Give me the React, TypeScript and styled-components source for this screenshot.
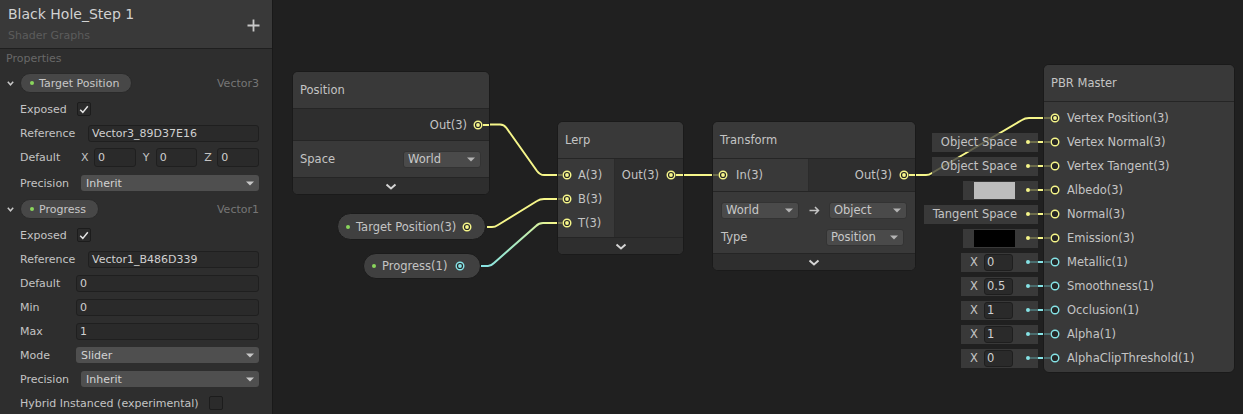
import styled, { createGlobalStyle } from "styled-components";

const X0 = 273;
const YELLOW = "#f6f68a";
const CYAN = "#86e3e6";
const YELLOW_DIM = "#6c6c4b";
const CYAN_DIM = "#4a6c6d";
const GREEN = "#8ad65c";

const GlobalStyle = createGlobalStyle`
  * { box-sizing: border-box; }
  body {
    margin: 0;
    background: #202020;
    font-family: "DejaVu Sans", "Liberation Sans", sans-serif;
    font-size: 11px;
    color: #c4c4c4;
  }
`;

const Page = styled.div`
  display: flex;
  width: 1243px;
  height: 414px;
  overflow: hidden;
`;

/* ---------- left blackboard ---------- */

const Panel = styled.aside`
  width: 273px;
  flex: none;
  height: 414px;
  background: #2e2e2e;
  border-right: 1px solid #191919;
  display: flex;
  flex-direction: column;
`;

const PanelHeader = styled.header`
  height: 49px;
  flex: none;
  background: #393939;
  border-bottom: 1px solid #1f1f1f;
  padding: 5px 12px 0 8px;
  display: flex;
  justify-content: space-between;
`;

const TitleBlock = styled.div`
  display: flex;
  flex-direction: column;
`;

const GraphTitle = styled.div`
  font-size: 14px;
  line-height: 18px;
  color: #d2d2d2;
`;

const GraphPath = styled.div`
  font-size: 11px;
  line-height: 14px;
  margin-top: 6px;
  color: #5c5c5c;
`;

const AddButton = styled.svg`
  margin-top: 14px;
  flex: none;
`;

const PanelBody = styled.div`
  display: flex;
  flex-direction: column;
  padding-right: 13px;
`;

const SectionLabel = styled.div`
  height: 20px;
  line-height: 20px;
  padding-left: 6px;
  color: #686868;
`;

const PropHead = styled.div`
  height: 24px;
  margin: 2px 0;
  display: flex;
  align-items: center;
  padding-left: 7px;
`;

const PropPill = styled.div`
  height: 20px;
  margin-left: 6px;
  padding: 0 12px 0 9px;
  border-radius: 10px;
  background: #474747;
  border: 1px solid #2a2a2a;
  display: flex;
  align-items: center;
  gap: 5px;
  color: #c8c8c8;
`;

const Dot = styled.span<{ $c: string }>`
  width: 4px;
  height: 4px;
  border-radius: 50%;
  background: ${(p) => p.$c};
  flex: none;
`;

const TypeName = styled.span`
  margin-left: auto;
  color: #767676;
`;

const FieldRow = styled.div`
  height: 24px;
  display: flex;
  align-items: center;
  padding-left: 20px;
`;

const FieldLabel = styled.span<{ $w?: number }>`
  flex: none;
  width: ${(p) => (p.$w ? `${p.$w}px` : "auto")};
  margin-right: ${(p) => (p.$w ? 0 : 10)}px;
  color: #c4c4c4;
`;

const TextField = styled.div<{ $h?: number }>`
  flex: 1;
  min-width: 0;
  height: ${(p) => p.$h ?? 17}px;
  line-height: ${(p) => (p.$h ?? 17) - 2}px;
  background: #2a2a2a;
  border: 1px solid #1f1f1f;
  border-radius: 3px;
  padding-left: 3px;
  color: #d0d0d0;
  white-space: nowrap;
  overflow: hidden;
`;

const SelectField = styled.div`
  flex: 1;
  height: 16px;
  background: #4f4f4f;
  border-radius: 3px;
  padding: 0 5px 0 5px;
  display: flex;
  align-items: center;
  justify-content: space-between;
  color: #d2d2d2;
`;

const CheckBox = styled.span`
  width: 14px;
  height: 14px;
  flex: none;
  background: #2b2b2b;
  border: 1px solid #1c1c1c;
  border-radius: 2px;
  display: flex;
  align-items: center;
  justify-content: center;
`;

const VecGroup = styled.div`
  flex: 1;
  display: flex;
  align-items: center;
  margin-right: 5px;
  &:last-child {
    margin-right: 0;
  }
`;

const AxisLabel = styled.span`
  width: 15px;
  flex: none;
  padding-left: 2px;
  color: #c4c4c4;
`;

/* ---------- graph canvas ---------- */

const Canvas = styled.main`
  position: relative;
  flex: 1;
  height: 414px;
  background: #202020;
  overflow: hidden;
`;

const WireLayer = styled.svg`
  position: absolute;
  left: 0;
  top: 0;
`;

const Placed = styled.div<{ $x: number; $y: number }>`
  position: absolute;
  left: ${(p) => p.$x - X0}px;
  top: ${(p) => p.$y}px;
`;

const Node = styled.div<{ $w: number }>`
  width: ${(p) => p.$w}px;
  flex: none;
  background: #393939;
  border: 1px solid #1a1a1a;
  border-radius: 6px;
  overflow: hidden;
  font-size: 11.5px;
  color: #c4c4c4;
`;

const NodeTitle = styled.div`
  height: 37px;
  padding-left: 7px;
  display: flex;
  align-items: center;
  background: #393939;
  border-bottom: 1px solid #252525;
`;

const OutputStrip = styled.div<{ $h: number }>`
  height: ${(p) => p.$h}px;
  background: #2e2e2e;
  border-bottom: 1px solid #252525;
  display: flex;
  align-items: center;
  justify-content: flex-end;
`;

const PortBody = styled.div`
  display: flex;
  border-bottom: 1px solid #252525;
`;

const InputCol = styled.div<{ $w: number; $pad: string }>`
  width: ${(p) => p.$w}px;
  flex: none;
  padding: ${(p) => p.$pad};
  background: #393939;
  border-right: 1px solid #2b2b2b;
`;

const OutputCol = styled.div<{ $pad: string }>`
  flex: 1;
  padding: ${(p) => p.$pad};
  background: #2e2e2e;
`;

const InRow = styled.div`
  height: 24px;
  display: flex;
  align-items: center;
`;

const OutRow = styled.div`
  height: 24px;
  display: flex;
  align-items: center;
  justify-content: flex-end;
`;

const InLabel = styled.span<{ $gap: number }>`
  margin-left: ${(p) => p.$gap}px;
  white-space: nowrap;
`;

const OutLabel = styled.span<{ $gap: number }>`
  margin-right: ${(p) => p.$gap}px;
  white-space: nowrap;
`;

const Stub = styled.span<{ $w: number; $c: string }>`
  width: ${(p) => p.$w}px;
  height: 2px;
  flex: none;
  background: ${(p) => p.$c};
`;

const Controls = styled.div<{ $pad: string; $gap?: number }>`
  padding: ${(p) => p.$pad};
  background: #393939;
  border-bottom: 1px solid #252525;
  display: flex;
  flex-direction: column;
  gap: ${(p) => p.$gap ?? 0}px;
`;

const ControlRow = styled.div<{ $h: number; $pr?: number }>`
  height: ${(p) => p.$h}px;
  padding-right: ${(p) => p.$pr ?? 0}px;
  display: flex;
  align-items: center;
  justify-content: space-between;
`;

const NodeSelect = styled.div<{ $w: number }>`
  width: ${(p) => p.$w}px;
  height: 17px;
  flex: none;
  background: #4a4a4a;
  border: 1px solid #333;
  border-radius: 3px;
  padding: 0 5px 0 4px;
  display: flex;
  align-items: center;
  justify-content: space-between;
  color: #c8c8c8;
`;

const Collapse = styled.div`
  height: 16px;
  background: #2e2e2e;
  display: flex;
  align-items: center;
  justify-content: center;
`;

const PortSvg = styled.svg`
  flex: none;
  display: block;
`;

const CanvasPill = styled.div<{ $h: number; $pr: number }>`
  height: ${(p) => p.$h}px;
  border-radius: ${(p) => p.$h / 2}px;
  background: #404040;
  border: 1px solid #1b1b1b;
  padding: 0 ${(p) => p.$pr}px 0 8px;
  display: flex;
  align-items: center;
  font-size: 11.5px;
  color: #c4c4c4;
  white-space: nowrap;
`;

const PillText = styled.span<{ $gap: number }>`
  margin: 0 ${(p) => p.$gap}px 0 6px;
`;

const MasterGroup = styled.div`
  display: flex;
  align-items: flex-start;
`;

const Defaults = styled.div`
  width: 125px;
  flex: none;
  padding-top: 42px;
  display: flex;
  flex-direction: column;
`;

const DefaultRow = styled.div`
  height: 24px;
  display: flex;
  align-items: center;
  justify-content: flex-end;
`;

const DefaultBox = styled.div<{ $pl: number }>`
  height: 19px;
  padding-left: ${(p) => p.$pl}px;
  background: rgba(64, 64, 64, 0.8);
  display: flex;
  align-items: center;
  font-size: 11.5px;
  color: #c4c4c4;
  white-space: nowrap;
`;

const Swatch = styled.span<{ $c: string }>`
  width: 41px;
  height: 17px;
  background: ${(p) => p.$c};
  flex: none;
`;

const ValueField = styled.span`
  width: 29px;
  height: 17px;
  margin-left: 6px;
  background: #2a2a2a;
  border: 1px solid #1e1e1e;
  border-radius: 3px;
  padding-left: 2px;
  line-height: 15px;
  color: #d0d0d0;
  flex: none;
`;

const BoxDot = styled.span<{ $c: string; $gap: number }>`
  width: 4px;
  height: 4px;
  margin-left: ${(p) => p.$gap}px;
  border-radius: 50%;
  background: ${(p) => p.$c};
  flex: none;
`;

const MasterBody = styled.div`
  padding: 4px 0 2px;
`;

/* ---------- small drawings ---------- */

const Port = ({ color, on }: { color: string; on?: boolean }) => (
  <PortSvg width="10" height="10" viewBox="0 0 10 10">
    <circle cx="5" cy="5" r="3.8" fill="#262626" stroke={color} strokeWidth="1.4" />
    {on && <circle cx="5" cy="5" r="1.9" fill={color} />}
  </PortSvg>
);

const DownArrow = ({ c = "#b4b4b4" }: { c?: string }) => (
  <svg width="8" height="5" viewBox="0 0 8 5">
    <polygon points="0,0.5 8,0.5 4,4.5" fill={c} />
  </svg>
);

const Chevron = () => (
  <svg width="12" height="7" viewBox="0 0 12 7">
    <polyline points="1.5,1.5 6,5.5 10.5,1.5" fill="none" stroke="#d4d4d4" strokeWidth="2" />
  </svg>
);

const SmallChevron = () => (
  <svg width="7" height="5" viewBox="0 0 7 5">
    <polyline points="0.8,0.8 3.5,3.8 6.2,0.8" fill="none" stroke="#c8c8c8" strokeWidth="1.5" />
  </svg>
);

const Check = () => (
  <svg width="10" height="9" viewBox="0 0 10 9">
    <polyline points="1.2,4.8 3.8,7.4 8.8,1.2" fill="none" stroke="#e4e4e4" strokeWidth="1.5" />
  </svg>
);

const RightArrow = () => (
  <svg width="11" height="9" viewBox="0 0 11 9">
    <path d="M0.5 4.5 H9.5 M6 1 L9.5 4.5 L6 8" fill="none" stroke="#c4c4c4" strokeWidth="1.5" />
  </svg>
);

/* ---------- data ---------- */

type Def =
  | { kind: "text"; text: string }
  | { kind: "color"; color: string }
  | { kind: "value"; value: string };

type MasterInput = { label: string; c: string; on?: boolean; def?: Def };

const masterInputs: MasterInput[] = [
  { label: "Vertex Position(3)", c: YELLOW, on: true },
  { label: "Vertex Normal(3)", c: YELLOW, def: { kind: "text", text: "Object Space" } },
  { label: "Vertex Tangent(3)", c: YELLOW, def: { kind: "text", text: "Object Space" } },
  { label: "Albedo(3)", c: YELLOW, def: { kind: "color", color: "#bdbdbd" } },
  { label: "Normal(3)", c: YELLOW, def: { kind: "text", text: "Tangent Space" } },
  { label: "Emission(3)", c: YELLOW, def: { kind: "color", color: "#000000" } },
  { label: "Metallic(1)", c: CYAN, def: { kind: "value", value: "0" } },
  { label: "Smoothness(1)", c: CYAN, def: { kind: "value", value: "0.5" } },
  { label: "Occlusion(1)", c: CYAN, def: { kind: "value", value: "1" } },
  { label: "Alpha(1)", c: CYAN, def: { kind: "value", value: "1" } },
  { label: "AlphaClipThreshold(1)", c: CYAN, def: { kind: "value", value: "0" } },
];

const dimOf = (c: string) => (c === CYAN ? CYAN_DIM : YELLOW_DIM);

const DefaultValue = ({ def, c }: { def: Def; c: string }) => {
  if (def.kind === "text")
    return (
      <DefaultBox $pl={9}>
        {def.text}
        <BoxDot $c={c} $gap={9} />
        <Stub $w={8} $c={dimOf(c)} />
      </DefaultBox>
    );
  if (def.kind === "color")
    return (
      <DefaultBox $pl={11}>
        <Swatch $c={def.color} />
        <BoxDot $c={c} $gap={11} />
        <Stub $w={8} $c={dimOf(c)} />
      </DefaultBox>
    );
  return (
    <DefaultBox $pl={9}>
      X
      <ValueField>{def.value}</ValueField>
      <BoxDot $c={c} $gap={13} />
      <Stub $w={8} $c={dimOf(c)} />
    </DefaultBox>
  );
};

/* ---------- pieces ---------- */

const Blackboard = () => (
  <Panel>
    <PanelHeader>
      <TitleBlock>
        <GraphTitle>Black Hole_Step 1</GraphTitle>
        <GraphPath>Shader Graphs</GraphPath>
      </TitleBlock>
      <AddButton width="13" height="13" viewBox="0 0 13 13">
        <path d="M6.5 0.5 V12.5 M0.5 6.5 H12.5" stroke="#c8c8c8" strokeWidth="1.8" />
      </AddButton>
    </PanelHeader>
    <PanelBody>
      <SectionLabel>Properties</SectionLabel>

      <PropHead>
        <SmallChevron />
        <PropPill>
          <Dot $c={GREEN} />
          Target Position
        </PropPill>
        <TypeName>Vector3</TypeName>
      </PropHead>
      <FieldRow>
        <FieldLabel $w={57}>Exposed</FieldLabel>
        <CheckBox>
          <Check />
        </CheckBox>
      </FieldRow>
      <FieldRow>
        <FieldLabel $w={68}>Reference</FieldLabel>
        <TextField>Vector3_89D37E16</TextField>
      </FieldRow>
      <FieldRow>
        <FieldLabel $w={59}>Default</FieldLabel>
        {["X", "Y", "Z"].map((a) => (
          <VecGroup key={a}>
            <AxisLabel>{a}</AxisLabel>
            <TextField $h={19}>0</TextField>
          </VecGroup>
        ))}
      </FieldRow>
      <FieldRow style={{ marginTop: 2 }}>
        <FieldLabel $w={61}>Precision</FieldLabel>
        <SelectField>
          Inherit
          <DownArrow c="#c8c8c8" />
        </SelectField>
      </FieldRow>

      <PropHead>
        <SmallChevron />
        <PropPill>
          <Dot $c={GREEN} />
          Progress
        </PropPill>
        <TypeName>Vector1</TypeName>
      </PropHead>
      <FieldRow>
        <FieldLabel $w={57}>Exposed</FieldLabel>
        <CheckBox>
          <Check />
        </CheckBox>
      </FieldRow>
      <FieldRow>
        <FieldLabel $w={68}>Reference</FieldLabel>
        <TextField>Vector1_B486D339</TextField>
      </FieldRow>
      <FieldRow>
        <FieldLabel $w={56}>Default</FieldLabel>
        <TextField>0</TextField>
      </FieldRow>
      <FieldRow>
        <FieldLabel $w={56}>Min</FieldLabel>
        <TextField>0</TextField>
      </FieldRow>
      <FieldRow>
        <FieldLabel $w={56}>Max</FieldLabel>
        <TextField>1</TextField>
      </FieldRow>
      <FieldRow>
        <FieldLabel $w={56}>Mode</FieldLabel>
        <SelectField>
          Slider
          <DownArrow c="#c8c8c8" />
        </SelectField>
      </FieldRow>
      <FieldRow>
        <FieldLabel $w={61}>Precision</FieldLabel>
        <SelectField>
          Inherit
          <DownArrow c="#c8c8c8" />
        </SelectField>
      </FieldRow>
      <FieldRow>
        <FieldLabel>Hybrid Instanced (experimental)</FieldLabel>
        <CheckBox />
      </FieldRow>
    </PanelBody>
  </Panel>
);

const Wires = () => (
  <WireLayer width="970" height="414" viewBox={`${X0} 0 970 414`}>
    <defs>
      <linearGradient id="progressWire" gradientUnits="userSpaceOnUse" x1="482" y1="0" x2="556" y2="0">
        <stop offset="0" stopColor={CYAN} />
        <stop offset="0.45" stopColor="#a9eac0" />
        <stop offset="1" stopColor={YELLOW} />
      </linearGradient>
    </defs>
    <g fill="none" strokeWidth="2" strokeLinejoin="round">
      <path d="M488 124.5 H500 Q504 124.5 506.5 128 L537 171 Q540 175 544 175 H559" stroke={YELLOW} />
      <path d="M487 227 H492 Q495 227 498 225 L537 201 Q540 199 544 199 H559" stroke={YELLOW} />
      <path d="M481 266 H488 Q491 266 494 263 L536 226 Q539 223 543 223 H559" stroke="url(#progressWire)" />
      <path d="M683 175 H714" stroke={YELLOW} />
      <path d="M915 175 H926 Q929 175 932 173 L1022 120 Q1025 118 1029 118 H1045" stroke={YELLOW} />
    </g>
  </WireLayer>
);

export default function App() {
  return (
    <Page>
      <GlobalStyle />
      <Blackboard />
      <Canvas>
        <Wires />

        <Placed $x={292} $y={71}>
          <Node $w={198}>
            <NodeTitle>Position</NodeTitle>
            <OutputStrip $h={32}>
              <OutLabel $gap={6}>Out(3)</OutLabel>
              <Port color={YELLOW} on />
              <Stub $w={6} $c={YELLOW} />
            </OutputStrip>
            <Controls $pad="0 8px 0 7px">
              <ControlRow $h={36}>
                Space
                <NodeSelect $w={78}>
                  World
                  <DownArrow />
                </NodeSelect>
              </ControlRow>
            </Controls>
            <Collapse>
              <Chevron />
            </Collapse>
          </Node>
        </Placed>

        <Placed $x={337} $y={213}>
          <CanvasPill $h={27} $pr={13}>
            <Dot $c={GREEN} />
            <PillText $gap={6}>Target Position(3)</PillText>
            <Port color={YELLOW} on />
          </CanvasPill>
        </Placed>

        <Placed $x={363} $y={253}>
          <CanvasPill $h={26} $pr={15}>
            <Dot $c={GREEN} />
            <PillText $gap={8}>Progress(1)</PillText>
            <Port color={CYAN} on />
          </CanvasPill>
        </Placed>

        <Placed $x={557} $y={121}>
          <Node $w={127}>
            <NodeTitle>Lerp</NodeTitle>
            <PortBody>
              <InputCol $w={57} $pad="4px 0 2px">
                {["A(3)", "B(3)", "T(3)"].map((l) => (
                  <InRow key={l}>
                    <Stub $w={4} $c={YELLOW_DIM} />
                    <Port color={YELLOW} on />
                    <InLabel $gap={6}>{l}</InLabel>
                  </InRow>
                ))}
              </InputCol>
              <OutputCol $pad="4px 0 2px">
                <OutRow>
                  <OutLabel $gap={7}>Out(3)</OutLabel>
                  <Port color={YELLOW} on />
                  <Stub $w={7} $c={YELLOW} />
                </OutRow>
              </OutputCol>
            </PortBody>
            <Collapse>
              <Chevron />
            </Collapse>
          </Node>
        </Placed>

        <Placed $x={712} $y={121}>
          <Node $w={204}>
            <NodeTitle>Transform</NodeTitle>
            <PortBody>
              <InputCol $w={96} $pad="4px 0">
                <InRow>
                  <Stub $w={5} $c={YELLOW_DIM} />
                  <Port color={YELLOW} on />
                  <InLabel $gap={8}>In(3)</InLabel>
                </InRow>
              </InputCol>
              <OutputCol $pad="4px 0">
                <OutRow>
                  <OutLabel $gap={7}>Out(3)</OutLabel>
                  <Port color={YELLOW} on />
                  <Stub $w={6} $c={YELLOW} />
                </OutRow>
              </OutputCol>
            </PortBody>
            <Controls $pad="9px 8px 7px 8px" $gap={9}>
              <ControlRow $h={18}>
                <NodeSelect $w={78}>
                  World
                  <DownArrow />
                </NodeSelect>
                <RightArrow />
                <NodeSelect $w={78}>
                  Object
                  <DownArrow />
                </NodeSelect>
              </ControlRow>
              <ControlRow $h={18} $pr={3}>
                Type
                <NodeSelect $w={78}>
                  Position
                  <DownArrow />
                </NodeSelect>
              </ControlRow>
            </Controls>
            <Collapse>
              <Chevron />
            </Collapse>
          </Node>
        </Placed>

        <Placed $x={918} $y={64}>
          <MasterGroup>
            <Defaults>
              {masterInputs.map((m) => (
                <DefaultRow key={m.label}>
                  {m.def && (
                    <>
                      <DefaultValue def={m.def} c={m.c} />
                      <Stub $w={5} $c={m.c} />
                    </>
                  )}
                </DefaultRow>
              ))}
            </Defaults>
            <Node $w={192}>
              <NodeTitle>PBR Master</NodeTitle>
              <MasterBody>
                {masterInputs.map((m) => (
                  <InRow key={m.label}>
                    <Stub $w={6} $c={dimOf(m.c)} />
                    <Port color={m.c} on={m.on} />
                    <InLabel $gap={7}>{m.label}</InLabel>
                  </InRow>
                ))}
              </MasterBody>
            </Node>
          </MasterGroup>
        </Placed>
      </Canvas>
    </Page>
  );
}
